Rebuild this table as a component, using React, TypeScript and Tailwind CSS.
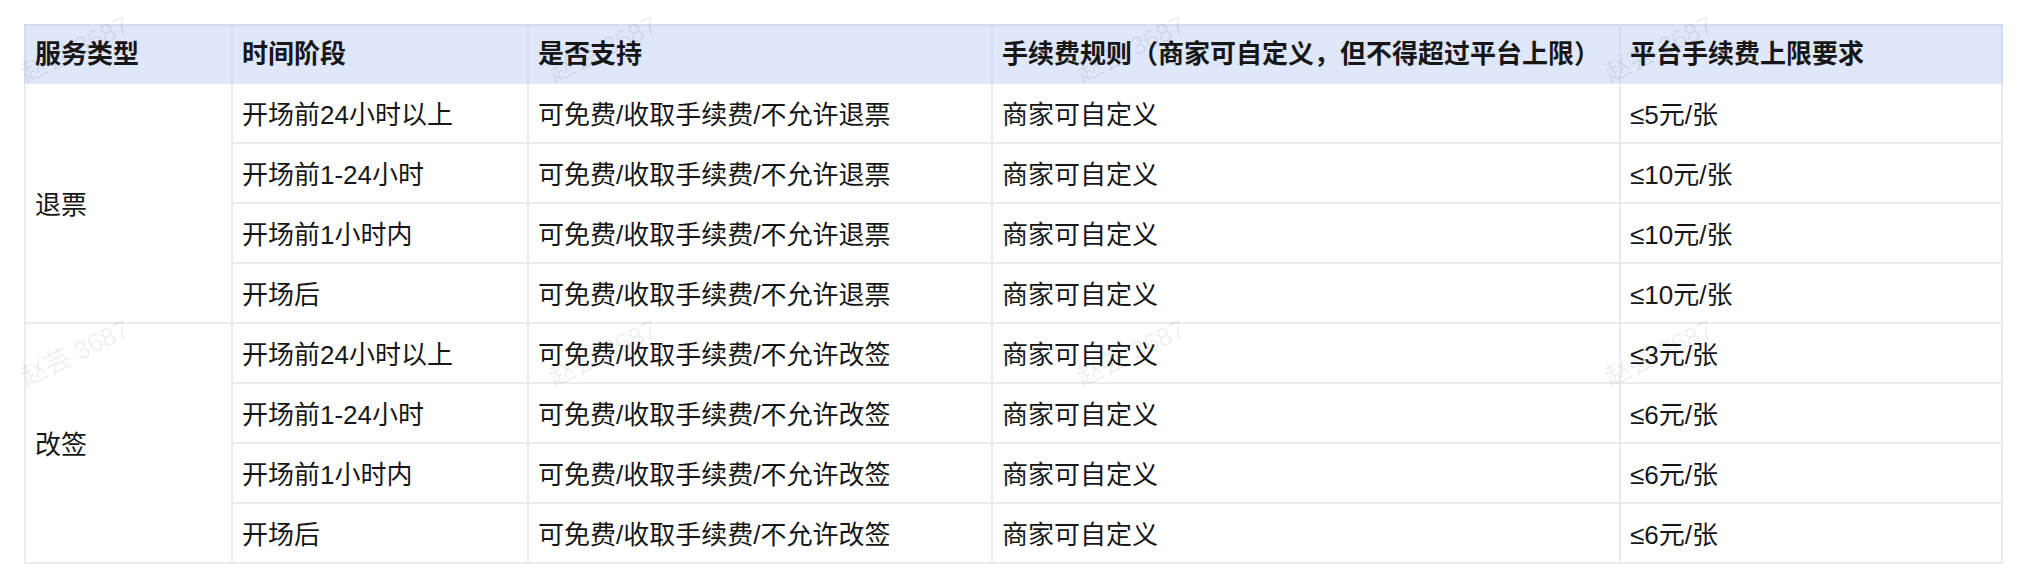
import React from "react";

type Group = {
  type: string;
  support: string;
  items: { stage: string; cap: string }[];
};

const groups: Group[] = [
  {
    type: "退票",
    support: "可免费/收取手续费/不允许退票",
    items: [
      { stage: "开场前24小时以上", cap: "≤5元/张" },
      { stage: "开场前1-24小时", cap: "≤10元/张" },
      { stage: "开场前1小时内", cap: "≤10元/张" },
      { stage: "开场后", cap: "≤10元/张" },
    ],
  },
  {
    type: "改签",
    support: "可免费/收取手续费/不允许改签",
    items: [
      { stage: "开场前24小时以上", cap: "≤3元/张" },
      { stage: "开场前1-24小时", cap: "≤6元/张" },
      { stage: "开场前1小时内", cap: "≤6元/张" },
      { stage: "开场后", cap: "≤6元/张" },
    ],
  },
];

const headers = [
  "服务类型",
  "时间阶段",
  "是否支持",
  "手续费规则（商家可自定义，但不得超过平台上限）",
  "平台手续费上限要求",
];

// watermark spots (bottom-left of the text, page coords)
const marks = [
  [29, 88],
  [557, 88],
  [1085, 88],
  [1613, 88],
  [29, 392],
  [557, 392],
  [1085, 392],
  [1613, 392],
];

const th =
  "h-[60px] px-[9px] text-left align-middle font-bold bg-[#dfe7fb] border-t-2 border-r-2 border-b-2 border-t-[#d3dcef] border-r-[#d3dcef] border-b-[#e4e8f0]";
const td =
  "h-[60px] px-[9px] pt-[3px] align-middle font-normal bg-white border-r-2 border-b-2 border-[#ebebeb]";

const App: React.FC = () => {
  return (
    <div className="w-[2028px] h-[588px] bg-white pt-[24px] pl-[24px] font-['Liberation_Sans','Noto_Sans_CJK_SC',sans-serif] text-[26px] leading-[30px] text-[#171717]">
      <div className="relative w-[1979px]">
        <table className="table-fixed border-separate border-spacing-0 w-[1979px]">
          <colgroup>
            <col className="w-[209px]" />
            <col className="w-[296px]" />
            <col className="w-[464px]" />
            <col className="w-[628px]" />
            <col className="w-[382px]" />
          </colgroup>
          <thead>
            <tr>
              {headers.map((h, i) => (
                <th
                  key={h}
                  className={
                    i === 0 ? `${th} border-l-2 border-l-[#d3dcef]` : th
                  }
                >
                  {h}
                </th>
              ))}
            </tr>
          </thead>
          <tbody>
            {groups.map((g) =>
              g.items.map((it, idx) => (
                <tr key={g.type + it.stage}>
                  {idx === 0 && (
                    <td
                      rowSpan={g.items.length}
                      className={`${td} border-l-2`}
                    >
                      {g.type}
                    </td>
                  )}
                  <td className={td}>{it.stage}</td>
                  <td className={td}>{g.support}</td>
                  <td className={td}>商家可自定义</td>
                  <td className={td}>{it.cap}</td>
                </tr>
              ))
            )}
          </tbody>
        </table>

        {/* watermark overlay */}
        {marks.map(([x, y], i) => (
          <div
            key={i}
            className="pointer-events-none absolute h-[30px] -rotate-[26deg] origin-bottom-left whitespace-nowrap text-[26px] leading-[30px] text-black/[0.07] select-none"
            style={{ left: x - 24, top: y - 24 - 30 }}
          >
            赵芸 3687
          </div>
        ))}
      </div>
    </div>
  );
};

export default App;
